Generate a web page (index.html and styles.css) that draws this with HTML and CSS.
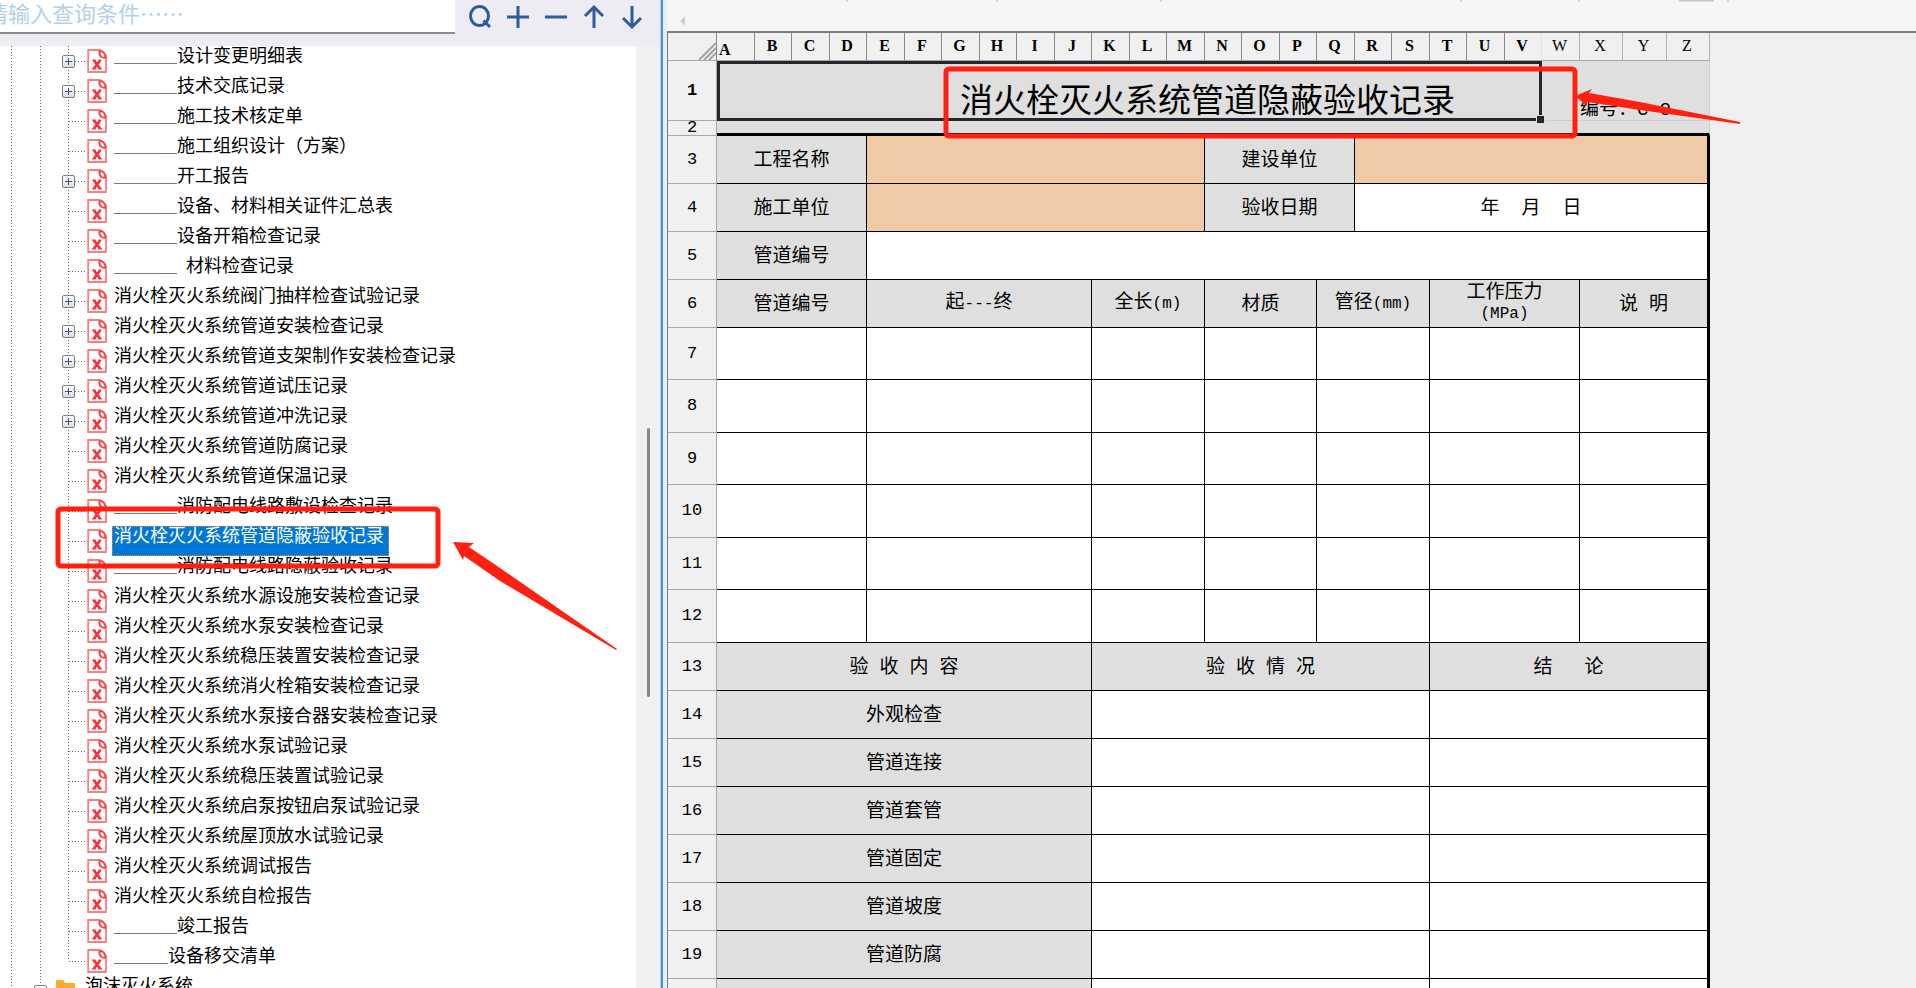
FILE: index.html
```html
<!DOCTYPE html>
<html lang="zh-CN">
<head>
<meta charset="utf-8">
<title>消火栓灭火系统管道隐蔽验收记录</title>
<link rel="stylesheet" href="styles.css">
</head>
<body>
<svg class="defs" aria-hidden="true">
  <symbol id="doc" viewBox="0 0 20 24">
    <path d="M1.200 1H13L19 7V23H1.200Z" fill="#fff" stroke="#ff7c7c" stroke-width="1.800"/>
    <path d="M12.500 2C16.500 2 18.600 4.500 18.400 8.600C15.500 9.300 11.800 7.500 12.500 2Z" fill="#fff" stroke="#ff3f45" stroke-width="1.900"/>
    <path d="M7 11.500L13 19.500M13 11.500L7 19.500" stroke="#fb3338" stroke-width="2.800"/>
    <path d="M5.200 11.300H8.600M11.600 11.300H14.300M5.200 19.700H8.600M11.300 19.700H14.800" stroke="#fb3338" stroke-width="1.600"/>
  </symbol>
</svg>
<div class="app">
  <aside class="side">
    <form class="search">
      <input class="search-box" type="text" aria-label="查询条件" placeholder="请输入查询条件……">
      <div class="tools">
        <button type="button" aria-label="查询"><svg viewBox="0 0 26 26"><ellipse cx="12.500" cy="12" rx="9" ry="9.500"/><path d="M16.500 16.500L23 23"/></svg></button>
        <button type="button" aria-label="展开"><svg viewBox="0 0 26 26"><path d="M2 13H24M13 2V24"/></svg></button>
        <button type="button" aria-label="收起"><svg viewBox="0 0 26 26"><path d="M2 13H24"/></svg></button>
        <button type="button" aria-label="上一个"><svg viewBox="0 0 26 26"><path d="M13 24V3M4 12L13 3L22 12"/></svg></button>
        <button type="button" aria-label="下一个"><svg viewBox="0 0 26 26"><path d="M13 2V23M4 14L13 23L22 14"/></svg></button>
      </div>
    </form>
    <div class="tree-area">
      <ul class="tree">
        <li><i class="g1"></i><i class="g2"></i><span class="branch"><button class="exp" aria-label="展开"></button></span><svg class="doc"><use href="#doc"/></svg><span class="label"><span class="line">_______</span>设计变更明细表</span></li>
        <li><i class="g1"></i><i class="g2"></i><span class="branch"><button class="exp" aria-label="展开"></button></span><svg class="doc"><use href="#doc"/></svg><span class="label"><span class="line">_______</span>技术交底记录</span></li>
        <li><i class="g1"></i><i class="g2"></i><span class="branch"></span><svg class="doc"><use href="#doc"/></svg><span class="label"><span class="line">_______</span>施工技术核定单</span></li>
        <li><i class="g1"></i><i class="g2"></i><span class="branch"></span><svg class="doc"><use href="#doc"/></svg><span class="label"><span class="line">_______</span>施工组织设计（方案）</span></li>
        <li><i class="g1"></i><i class="g2"></i><span class="branch"><button class="exp" aria-label="展开"></button></span><svg class="doc"><use href="#doc"/></svg><span class="label"><span class="line">_______</span>开工报告</span></li>
        <li><i class="g1"></i><i class="g2"></i><span class="branch"></span><svg class="doc"><use href="#doc"/></svg><span class="label"><span class="line">_______</span>设备、材料相关证件汇总表</span></li>
        <li><i class="g1"></i><i class="g2"></i><span class="branch"></span><svg class="doc"><use href="#doc"/></svg><span class="label"><span class="line">_______</span>设备开箱检查记录</span></li>
        <li><i class="g1"></i><i class="g2"></i><span class="branch"></span><svg class="doc"><use href="#doc"/></svg><span class="label"><span class="line">_______ </span>材料检查记录</span></li>
        <li><i class="g1"></i><i class="g2"></i><span class="branch"><button class="exp" aria-label="展开"></button></span><svg class="doc"><use href="#doc"/></svg><span class="label">消火栓灭火系统阀门抽样检查试验记录</span></li>
        <li><i class="g1"></i><i class="g2"></i><span class="branch"><button class="exp" aria-label="展开"></button></span><svg class="doc"><use href="#doc"/></svg><span class="label">消火栓灭火系统管道安装检查记录</span></li>
        <li><i class="g1"></i><i class="g2"></i><span class="branch"><button class="exp" aria-label="展开"></button></span><svg class="doc"><use href="#doc"/></svg><span class="label">消火栓灭火系统管道支架制作安装检查记录</span></li>
        <li><i class="g1"></i><i class="g2"></i><span class="branch"><button class="exp" aria-label="展开"></button></span><svg class="doc"><use href="#doc"/></svg><span class="label">消火栓灭火系统管道试压记录</span></li>
        <li><i class="g1"></i><i class="g2"></i><span class="branch"><button class="exp" aria-label="展开"></button></span><svg class="doc"><use href="#doc"/></svg><span class="label">消火栓灭火系统管道冲洗记录</span></li>
        <li><i class="g1"></i><i class="g2"></i><span class="branch"></span><svg class="doc"><use href="#doc"/></svg><span class="label">消火栓灭火系统管道防腐记录</span></li>
        <li><i class="g1"></i><i class="g2"></i><span class="branch"></span><svg class="doc"><use href="#doc"/></svg><span class="label">消火栓灭火系统管道保温记录</span></li>
        <li><i class="g1"></i><i class="g2"></i><span class="branch"></span><svg class="doc"><use href="#doc"/></svg><span class="label"><span class="line">_______</span>消防配电线路敷设检查记录</span></li>
        <li><i class="g1"></i><i class="g2"></i><span class="branch"></span><svg class="doc"><use href="#doc"/></svg><span class="label selected">消火栓灭火系统管道隐蔽验收记录</span></li>
        <li><i class="g1"></i><i class="g2"></i><span class="branch"></span><svg class="doc"><use href="#doc"/></svg><span class="label"><span class="line">_______</span>消防配电线路隐蔽验收记录</span></li>
        <li><i class="g1"></i><i class="g2"></i><span class="branch"></span><svg class="doc"><use href="#doc"/></svg><span class="label">消火栓灭火系统水源设施安装检查记录</span></li>
        <li><i class="g1"></i><i class="g2"></i><span class="branch"></span><svg class="doc"><use href="#doc"/></svg><span class="label">消火栓灭火系统水泵安装检查记录</span></li>
        <li><i class="g1"></i><i class="g2"></i><span class="branch"></span><svg class="doc"><use href="#doc"/></svg><span class="label">消火栓灭火系统稳压装置安装检查记录</span></li>
        <li><i class="g1"></i><i class="g2"></i><span class="branch"></span><svg class="doc"><use href="#doc"/></svg><span class="label">消火栓灭火系统消火栓箱安装检查记录</span></li>
        <li><i class="g1"></i><i class="g2"></i><span class="branch"></span><svg class="doc"><use href="#doc"/></svg><span class="label">消火栓灭火系统水泵接合器安装检查记录</span></li>
        <li><i class="g1"></i><i class="g2"></i><span class="branch"></span><svg class="doc"><use href="#doc"/></svg><span class="label">消火栓灭火系统水泵试验记录</span></li>
        <li><i class="g1"></i><i class="g2"></i><span class="branch"></span><svg class="doc"><use href="#doc"/></svg><span class="label">消火栓灭火系统稳压装置试验记录</span></li>
        <li><i class="g1"></i><i class="g2"></i><span class="branch"></span><svg class="doc"><use href="#doc"/></svg><span class="label">消火栓灭火系统启泵按钮启泵试验记录</span></li>
        <li><i class="g1"></i><i class="g2"></i><span class="branch"></span><svg class="doc"><use href="#doc"/></svg><span class="label">消火栓灭火系统屋顶放水试验记录</span></li>
        <li><i class="g1"></i><i class="g2"></i><span class="branch"></span><svg class="doc"><use href="#doc"/></svg><span class="label">消火栓灭火系统调试报告</span></li>
        <li><i class="g1"></i><i class="g2"></i><span class="branch"></span><svg class="doc"><use href="#doc"/></svg><span class="label">消火栓灭火系统自检报告</span></li>
        <li><i class="g1"></i><i class="g2"></i><span class="branch"></span><svg class="doc"><use href="#doc"/></svg><span class="label"><span class="line">_______</span>竣工报告</span></li>
        <li><i class="g1"></i><i class="g2"></i><span class="branch last"></span><svg class="doc"><use href="#doc"/></svg><span class="label"><span class="line">______</span>设备移交清单</span></li>
        <li class="folder-row"><i class="g1"></i><span class="branch parent"><button class="exp open" aria-label="收起"></button></span><svg class="folder" viewBox="0 0 20 20"><path d="M0 0H7L9 3H19V18H0Z" fill="#fdab2b"/><path d="M4 8H20L17 18H1Z" fill="#ffd27c"/></svg><span class="label">泡沫灭火系统</span></li>
      </ul>
      <div class="scroll"><div class="thumb"></div></div>
    </div>
  </aside>
  <div class="splitter"></div>
  <main class="sheet">
    <div class="ribbon"><svg class="cut" width="1240" height="2"><path d="M180 0V2M330 0V2M494 0V2M794 0V2M912 0V2M1061 0V2" stroke="#d4d4d4" stroke-width="2"/><path d="M1012 0H1047" stroke="#c6c6c6" stroke-width="3"/></svg></div>
    <div class="tabs"><svg width="8" height="10" viewBox="0 0 8 10"><path d="M6 0V10L1 5Z" fill="#cfcfd2"/></svg></div>
    <table class="grid">
      <colgroup>
        <col class="rowhead">
        <col class="even"><col class="odd"><col class="even"><col class="odd"><col class="even"><col class="odd">
        <col class="even"><col class="odd"><col class="even"><col class="odd"><col class="even"><col class="odd">
        <col class="even"><col class="odd"><col class="even"><col class="odd"><col class="even"><col class="odd">
        <col class="even"><col class="odd"><col class="even"><col class="odd"><col class="even">
        <col class="wide"><col class="wider"><col class="wide">
      </colgroup>
      <tr class="cols">
        <th class="corner"><svg width="17" height="17" viewBox="0 0 17 17"><path d="M0 17L17 0M5 17L17 5M10 17L17 10" stroke="#a2a2a2" stroke-width="2"/></svg></th>
        <th class="first">A</th><th>B</th><th>C</th><th>D</th><th>E</th><th>F</th><th>G</th><th>H</th><th>I</th><th>J</th><th>K</th><th>L</th><th>M</th><th>N</th><th>O</th><th>P</th><th>Q</th><th>R</th><th>S</th><th>T</th><th>U</th><th class="end">V</th><th class="plain">W</th><th class="plain">X</th><th class="plain">Y</th><th class="plain">Z</th>
      </tr>
      <tr class="r1"><th class="on">1</th><td class="title" colspan="22">消火栓灭火系统管道隐蔽验收记录<span class="handle"></span></td><td class="blank"></td><td class="blank code" colspan="3">编号：<span class="latin">C-9</span></td></tr>
      <tr class="r2"><th>2</th><td class="rule" colspan="26"></td></tr>
      <tr class="r48"><th>3</th><td class="head" colspan="4">工程名称</td><td class="fill" colspan="9"></td><td class="head" colspan="4">建设单位</td><td class="fill edge" colspan="9"></td></tr>
      <tr class="r48"><th>4</th><td class="head" colspan="4">施工单位</td><td class="fill" colspan="9"></td><td class="head" colspan="4">验收日期</td><td class="edge" colspan="9"><span class="spread date"><span>年</span><span>月</span><span>日</span></span></td></tr>
      <tr class="r48"><th>5</th><td class="head" colspan="4">管道编号</td><td class="edge" colspan="22"></td></tr>
      <tr class="r48"><th>6</th><td class="head" colspan="4">管道编号</td><td class="head" colspan="6">起<span class="latin">---</span>终</td><td class="head" colspan="3">全长<span class="latin">(m)</span></td><td class="head" colspan="3">材质</td><td class="head" colspan="3">管径<span class="latin">(mm)</span></td><td class="head" colspan="4">工作压力<br><span class="latin">(MPa)</span></td><td class="head edge" colspan="3"><span class="spread"><span>说</span><span>明</span></span></td></tr>
      <tr class="r52"><th>7</th><td colspan="4"></td><td colspan="6"></td><td colspan="3"></td><td colspan="3"></td><td colspan="3"></td><td colspan="4"></td><td class="edge" colspan="3"></td></tr>
      <tr class="r53"><th>8</th><td colspan="4"></td><td colspan="6"></td><td colspan="3"></td><td colspan="3"></td><td colspan="3"></td><td colspan="4"></td><td class="edge" colspan="3"></td></tr>
      <tr class="r52"><th>9</th><td colspan="4"></td><td colspan="6"></td><td colspan="3"></td><td colspan="3"></td><td colspan="3"></td><td colspan="4"></td><td class="edge" colspan="3"></td></tr>
      <tr class="r53"><th>10</th><td colspan="4"></td><td colspan="6"></td><td colspan="3"></td><td colspan="3"></td><td colspan="3"></td><td colspan="4"></td><td class="edge" colspan="3"></td></tr>
      <tr class="r52"><th>11</th><td colspan="4"></td><td colspan="6"></td><td colspan="3"></td><td colspan="3"></td><td colspan="3"></td><td colspan="4"></td><td class="edge" colspan="3"></td></tr>
      <tr class="r53"><th>12</th><td colspan="4"></td><td colspan="6"></td><td colspan="3"></td><td colspan="3"></td><td colspan="3"></td><td colspan="4"></td><td class="edge" colspan="3"></td></tr>
      <tr class="r48"><th>13</th><td class="head" colspan="10"><span class="spread"><span>验</span><span>收</span><span>内</span><span>容</span></span></td><td class="head" colspan="9"><span class="spread"><span>验</span><span>收</span><span>情</span><span>况</span></span></td><td class="head edge" colspan="7"><span class="spread far"><span>结</span><span>论</span></span></td></tr>
      <tr class="r48"><th>14</th><td class="head" colspan="10">外观检查</td><td colspan="9"></td><td class="edge" colspan="7"></td></tr>
      <tr class="r48"><th>15</th><td class="head" colspan="10">管道连接</td><td colspan="9"></td><td class="edge" colspan="7"></td></tr>
      <tr class="r48"><th>16</th><td class="head" colspan="10">管道套管</td><td colspan="9"></td><td class="edge" colspan="7"></td></tr>
      <tr class="r48"><th>17</th><td class="head" colspan="10">管道固定</td><td colspan="9"></td><td class="edge" colspan="7"></td></tr>
      <tr class="r48"><th>18</th><td class="head" colspan="10">管道坡度</td><td colspan="9"></td><td class="edge" colspan="7"></td></tr>
      <tr class="r48"><th>19</th><td class="head" colspan="10">管道防腐</td><td colspan="9"></td><td class="edge" colspan="7"></td></tr>
      <tr class="r48"><th></th><td class="head" colspan="10"></td><td colspan="9"></td><td class="edge" colspan="7"></td></tr>
    </table>
  </main>
</div>
<svg class="marks" width="1916" height="988" viewBox="0 0 1916 988" aria-hidden="true">
  <rect x="58" y="509" width="380" height="57" rx="3"/>
  <rect x="946" y="69" width="629" height="67" rx="3"/>
  <path d="M453 542L474 543L469 547L500 568L617 649L616 650L500 581L464 556L463 560Z"/>
  <path d="M1575 96L1592 89L1589 93L1640 102L1740 122V124L1640 110L1587 102L1587 106Z"/>
</svg>
</body>
</html>
```
FILE: styles.css
```css
* { box-sizing: border-box; }

body {
  margin: 0;
  height: 100vh;
  overflow: hidden;
  background: #efefef;
  color: #000;
  font-family: "Noto Sans CJK SC", sans-serif;
}

.defs { position: absolute; width: 0; height: 0; }

.app { display: flex; height: 100vh; overflow: hidden; }

/* Left panel */
.side { flex: 0 0 660px; display: flex; flex-direction: column; min-height: 0; }

.search { display: flex; flex: 0 0 46px; align-items: flex-start; background: #edecf2; }

.search-box {
  flex: 0 0 455px;
  height: 34px;
  padding: 0 0 8px;
  border: 0;
  border-bottom: 2px solid #8c8c8c;
  background: #fff;
  font: 22px/24px "Noto Sans CJK SC", sans-serif;
  text-indent: -14px;
}
.search-box::placeholder { color: #b4cfea; opacity: 1; }

.tools { display: flex; gap: 12px; padding: 4px 0 0 12px; }
.tools button { width: 26px; height: 26px; padding: 0; border: 0; background: none; }
.tools svg { display: block; fill: none; stroke: #2c5ba0; stroke-width: 3; }

.tree-area { display: flex; flex: 1; min-height: 0; overflow: hidden; background: #fff; }

.tree { flex: 1; margin: 0; padding: 0 0 0 11px; list-style: none; }
.tree li { display: flex; height: 30px; }

.g1, .g2 {
  background: repeating-linear-gradient(#666 0 1px, transparent 1px 3px) 0 0 / 1px 30px no-repeat;
}
.g1 { flex: 0 0 29px; }
.g2 { flex: 0 0 22px; }

.branch {
  flex: 0 0 25px;
  padding-top: 9px;
  background:
    repeating-linear-gradient(#666 0 1px, transparent 1px 3px) 6px 0 / 1px 30px no-repeat,
    repeating-linear-gradient(90deg, #666 0 1px, transparent 1px 3px) 7px 15px / 16px 1px no-repeat;
}
.branch.last {
  background:
    repeating-linear-gradient(#666 0 1px, transparent 1px 3px) 6px 0 / 1px 15px no-repeat,
    repeating-linear-gradient(90deg, #666 0 1px, transparent 1px 3px) 7px 15px / 16px 1px no-repeat;
}
.branch.parent { flex-basis: 22px; margin-left: -6px; }

.exp {
  display: block;
  width: 13px;
  height: 13px;
  padding: 0;
  border: 1px solid #7e7e7e;
  border-radius: 2px;
  background:
    linear-gradient(#2f52a6, #2f52a6) center / 7px 1px no-repeat,
    linear-gradient(#2f52a6, #2f52a6) center / 1px 7px no-repeat,
    linear-gradient(#fff, #dcdcdc);
}
.exp.open {
  background:
    linear-gradient(#2f52a6, #2f52a6) center / 7px 1px no-repeat,
    linear-gradient(#fff, #dcdcdc);
}

.doc { flex: 0 0 20px; height: 24px; margin-top: 3px; }
.folder { flex: 0 0 20px; height: 20px; margin-top: 4px; }

.label {
  height: 30px;
  margin-left: 5px;
  padding: 0 5px 0 2px;
  font-size: 18px;
  line-height: 16px;
  white-space: pre;
}
.folder-row .label { margin-left: 7px; }
.label.selected {
  padding: 0 4px 0 1px;
  border: 1px dotted #e08a3c;
  background: #0178d7;
  color: #fff;
  line-height: 14px;
}
.line { font: bold 15px/16px "Liberation Mono", monospace; }

.scroll { flex: 0 0 24px; padding: 382px 0 0 11px; background: #f0f0f0; }
.thumb { width: 3px; height: 269px; border-radius: 2px; background: #868686; }

.splitter {
  flex: 0 0 7px;
  border-left: 1px solid #b9cce6;
  background: linear-gradient(90deg, #5b8dd2 0 2px, #e6ecf5 2px 7px);
}

/* Spreadsheet */
.sheet { flex: 1; min-width: 0; overflow: hidden; }

.ribbon { height: 12px; background: #f6f6f6; overflow: hidden; }
.cut { display: block; }
.tabs { height: 21px; padding: 4px 0 0 12px; border-bottom: 2px solid #7c7c7c; background: #f5f5f8; }
.tabs svg { display: block; }

.grid {
  width: 1043px;
  table-layout: fixed;
  border-collapse: separate;
  border-spacing: 0;
  border-left: 1px solid #7c7c7c;
  font-size: 19px;
  line-height: 20px;
}
.rowhead { width: 49px; }
.even { width: 38px; }
.odd { width: 37px; }
.wide { width: 43px; }
.wider { width: 44px; }

.grid th {
  padding: 0;
  border-right: 1px solid #a8a8a8;
  border-bottom: 1px solid #a8a8a8;
  background: #f0f0f0;
  font: 17px/20px "Liberation Mono", monospace;
}
.grid .cols th {
  padding: 0 2px 2px 0;
  border-right-color: #8a8a8a;
  font: bold 16px/20px "Liberation Serif", serif;
}
.grid .cols .plain { border-right-color: #b4b4b4; font-weight: normal; }
.grid .cols .end { border-right-color: #e4e4e4; }
.grid .cols .first { padding: 0 0 0 2px; text-align: left; vertical-align: bottom; }
.grid .cols .corner { padding: 0; text-align: right; vertical-align: bottom; }
.corner svg { display: block; margin-left: auto; }
.grid .on { font-weight: bold; }

.grid td {
  padding: 0 0 3px;
  border-right: 1px solid #000;
  border-bottom: 1px solid #000;
  background: #fff;
  text-align: center;
}
.grid .head { background: #dfdfdf; }
.grid .fill { background: #f0c9a6; }
.grid .edge { border-right: 3px solid #000; }

.cols { height: 28px; }
.r1 { height: 60px; }
.r2 { height: 15px; }
.r48 { height: 48px; }
.r52 { height: 52px; }
.r53 { height: 53px; }

.grid .title {
  position: relative;
  padding: 14px 0 0 156px;
  border: 3px solid #23272d;
  background: #dfdfdf;
  font-size: 33px;
  line-height: 36px;
}
.handle {
  position: absolute;
  right: -6px;
  bottom: -6px;
  width: 9px;
  height: 9px;
  border: 1px solid #dfdfdf;
  background: #23272d;
}
.grid .blank { border-right: 0; border-bottom: 1px solid #d0cec8; background: #dfdfdf; }
.grid .code { padding: 0; border-right: 1px solid #d0cec8; text-align: left; vertical-align: bottom; }
.grid .r2 th { line-height: 12px; }
.grid .rule { padding: 0; border-right: 1px solid #d0cec8; border-bottom: 3px solid #000; background: #dfdfdf; line-height: 0; }

.latin { font: 16px/20px "Liberation Mono", monospace; }
.code .latin { font-size: 19px; }
.spread { display: inline-flex; gap: 11px; }
.date { gap: 22px; }
.far { gap: 32px; }

/* Red call-outs drawn over both panes */
.marks { position: absolute; left: 0; top: 0; pointer-events: none; }
.marks rect { fill: none; stroke: #ff2012; stroke-width: 5; }
.marks path { fill: #ff2012; }
```
